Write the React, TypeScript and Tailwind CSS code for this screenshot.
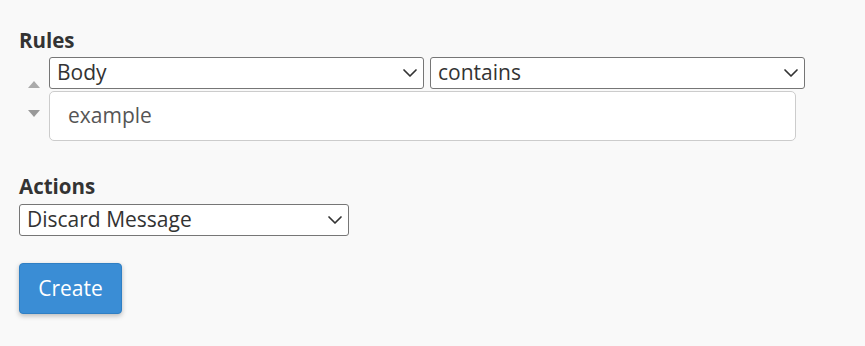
import React from "react";
import { ChevronDown } from "lucide-react";

interface SelectBoxProps {
  value: string;
  className?: string;
}

const SelectBox: React.FC<SelectBoxProps> = ({ value, className }) => (
  <div
    className={`flex items-center justify-between h-[32px] bg-white border border-[#767676] rounded-[3px] pl-[7px] pr-[1px] ${className || ""}`}
  >
    <span className="text-[21px] leading-none text-[#333] -mt-[1px]">{value}</span>
    <ChevronDown className="w-[24px] h-[24px] text-[#333]" strokeWidth={1.7} />
  </div>
);

const App: React.FC = () => {
  return (
    <div
      className="w-[865px] h-[346px] bg-[#f9f9f9] px-[19px] pt-[27px] text-[#333]"
      style={{ fontFamily: '"Open Sans", "Noto Sans", sans-serif' }}
    >
      {/* Rules */}
      <h2 className="text-[20.5px] font-bold leading-[26px]">Rules</h2>
      <div className="flex mt-[4px]">
        <div className="w-[30px] flex flex-col items-center pt-[24px] gap-[22px]">
          <svg width="12" height="7" viewBox="0 0 12 7">
            <path d="M0 7 L6 0 L12 7 Z" fill="#aaa" />
          </svg>
          <svg width="12" height="7" viewBox="0 0 12 7">
            <path d="M0 0 L6 7 L12 0 Z" fill="#999" />
          </svg>
        </div>
        <div className="flex flex-col">
          <div className="flex gap-[6px]">
            <SelectBox value="Body" className="w-[375px]" />
            <SelectBox value="contains" className="w-[375px]" />
          </div>
          <div className="mt-[2px] w-[747px] h-[50px] bg-white border border-[#ccc] rounded-[5px] flex items-center px-[18px]">
            <span className="text-[21px] text-[#555]">example</span>
          </div>
        </div>
      </div>

      {/* Actions */}
      <h2 className="text-[20.5px] font-bold leading-[26px] mt-[32px]">Actions</h2>
      <SelectBox value="Discard Message" className="w-[330px] mt-[5px]" />

      <button className="mt-[27px] w-[103px] h-[51px] bg-[#3a8dd5] border border-[#2f7fc4] rounded-[4px] text-white text-[21px] shadow-[0_2px_5px_rgba(0,0,0,0.25)]">
        Create
      </button>
    </div>
  );
};

export default App;
